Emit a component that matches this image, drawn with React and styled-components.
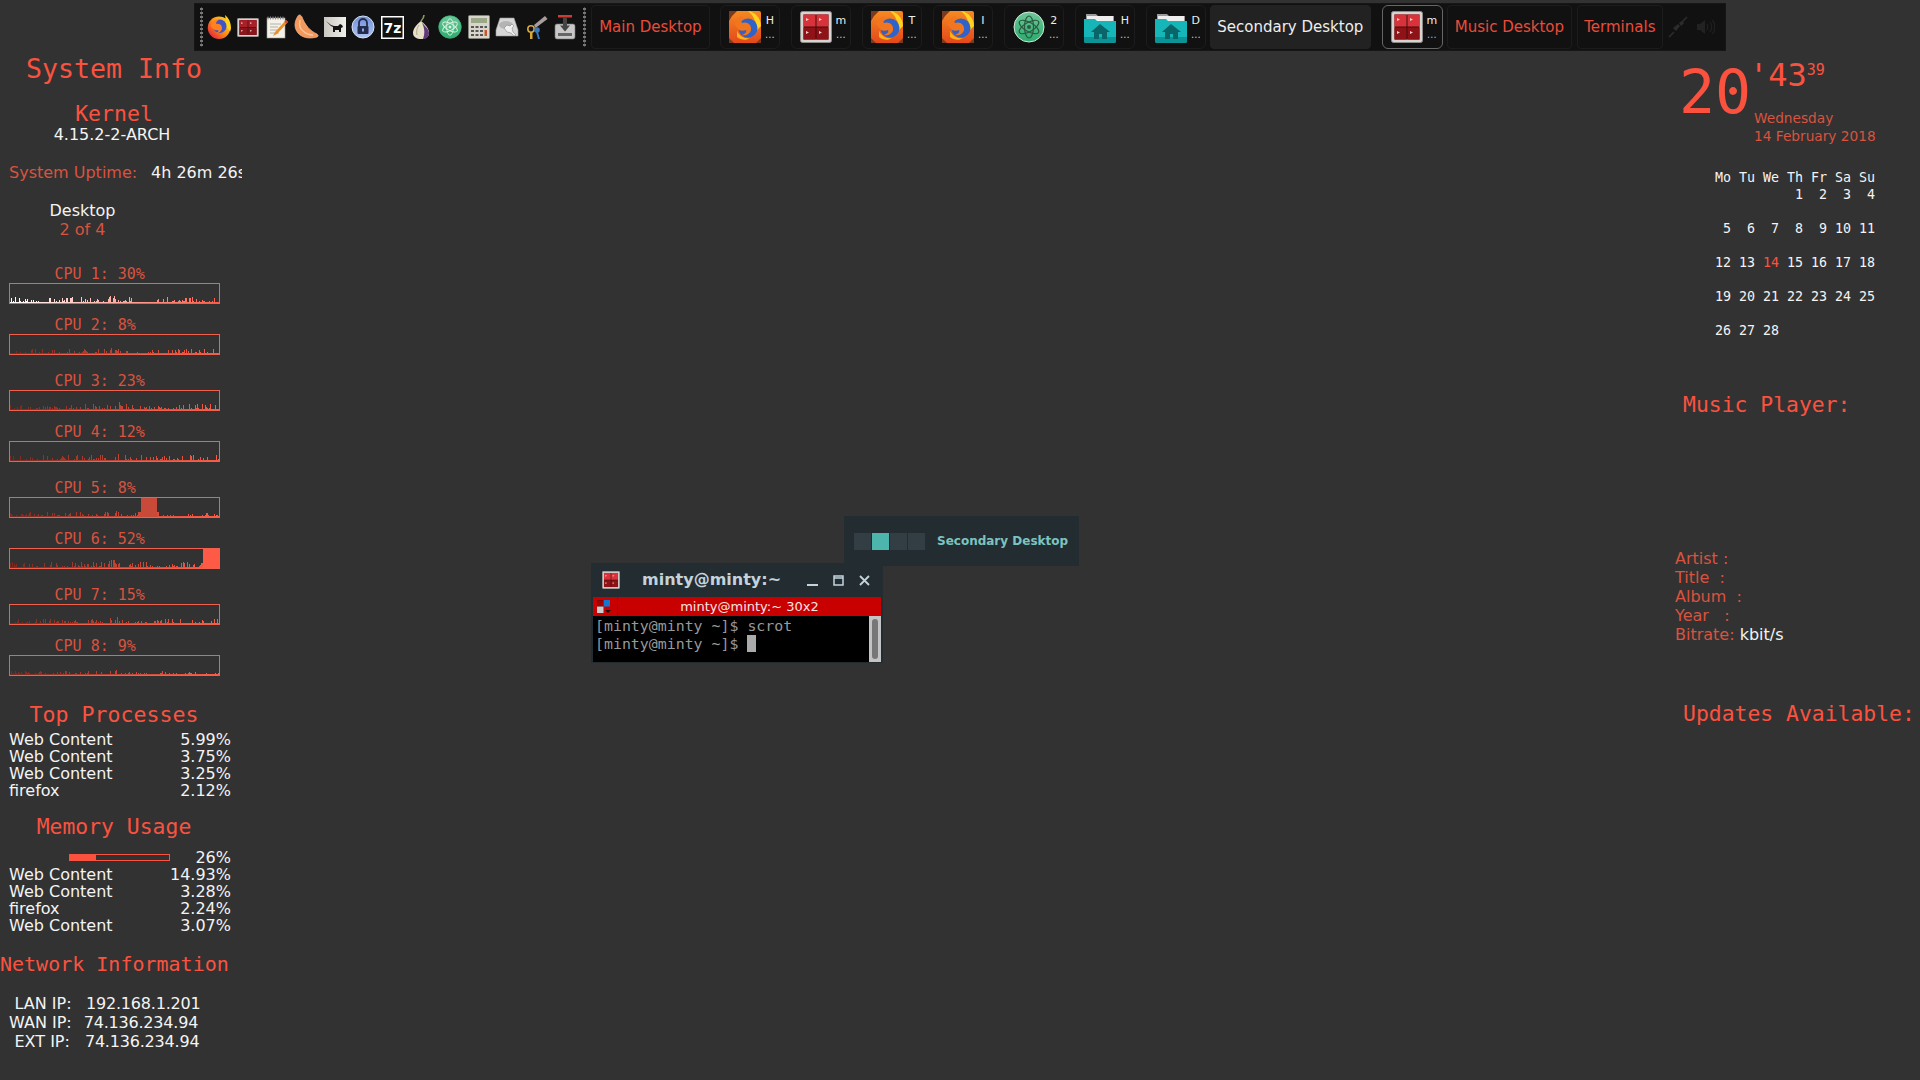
import styled, { createGlobalStyle } from 'styled-components'

const CORAL = '#fb5240'
const DIM = '#d9533f'
const MONO = '"DejaVu Sans Mono", "Liberation Mono", monospace'
const SANS = '"DejaVu Sans", "Noto Sans", sans-serif'

const GlobalStyle = createGlobalStyle`
  html, body {
    margin: 0;
    padding: 0;
    background: #323232;
  }
`

const Desktop = styled.div`
  position: relative;
  width: 1920px;
  height: 1080px;
  overflow: hidden;
  background: #323232;
  font-family: ${SANS};
`

/* ---------- top panel ---------- */
const Panel = styled.div`
  display: flex;
  align-items: center;
  box-sizing: border-box;
  width: 1532px;
  height: 48px;
  margin: 3px 0 0 194px;
  padding-left: 6px;
  background: #111;
  box-shadow: inset 0 0 0 1px #161616;
`
const Grip = styled.div`
  flex: none;
  width: 3px;
  height: 40px;
  background: radial-gradient(circle at center, #777 1.4px, transparent 1.6px) 0 0 / 3px 4px;
`
const Launchers = styled.div`
  display: flex;
  flex: none;
  margin: 0 4px 0 2px;
`
const LauncherSlot = styled.div`
  display: flex;
  align-items: center;
  justify-content: center;
  width: 28.8px;
  height: 32px;
`
const TextButton = styled.div`
  flex: none;
  box-sizing: border-box;
  width: ${p => p.$width}px;
  height: 44px;
  margin-left: ${p => p.$left || 0}px;
  border: 1px solid ${p => (p.$active ? '#222' : '#1c1c1c')};
  border-radius: 4px;
  background: ${p => (p.$active ? '#222' : 'transparent')};
  color: ${p => (p.$active ? '#eee' : '#ea4c3a')};
  font-size: 15px;
  line-height: 42px;
  text-align: center;
  white-space: nowrap;
`
const TaskButton = styled.div`
  flex: none;
  display: flex;
  align-items: center;
  box-sizing: border-box;
  width: ${p => (p.$active ? 61 : 60)}px;
  height: 44px;
  margin-left: ${p => p.$left}px;
  padding-left: 8px;
  border: 1px solid ${p => (p.$active ? '#666' : '#1c1c1c')};
  border-radius: 6px;
`
const TaskLabel = styled.div`
  display: flex;
  flex-direction: column;
  align-items: center;
  width: 16px;
  margin-left: 1px;
  color: #eee;
  font-size: 11px;
  line-height: 16px;
`
const TaskDots = styled.span`
  color: ${p => (p.$active ? '#7cc4f0' : '#ccc')};
  font-size: 10px;
  line-height: 12px;
`
const Tray = styled.div`
  display: flex;
  align-items: center;
  gap: 9px;
  margin-left: 5px;
`

/* ---------- left conky ---------- */
const LeftConky = styled.div`
  position: absolute;
  top: 0;
  left: 0;
  box-sizing: border-box;
  width: 242px;
  height: 1080px;
  overflow: hidden;
  padding-top: 54px;
  color: #f4f4f4;
  font-size: 16px;
`
const Heading = styled.div`
  width: 228px;
  margin-top: ${p => p.$top || 0}px;
  color: ${CORAL};
  font-family: ${MONO};
  font-size: ${p => p.$size}px;
  line-height: ${p => p.$line}px;
  text-align: center;
  white-space: nowrap;
`
const PlainCenter = styled.div`
  width: ${p => p.$width || 224}px;
  color: ${p => p.$color || '#f4f4f4'};
  font-size: 16px;
  line-height: ${p => p.$line || 18}px;
  margin-top: ${p => p.$top || 0}px;
  text-align: center;
`
const UptimeRow = styled.div`
  display: flex;
  margin-top: 20px;
  padding-left: 9px;
  font-size: 16px;
  line-height: 18px;
  white-space: nowrap;
`
const UptimeLabel = styled.span`
  flex: none;
  width: 142px;
  color: ${DIM};
`
const CpuBlock = styled.div`
  margin-top: ${p => p.$top}px;
  padding-left: 9px;
`
const CpuLabel = styled.div`
  padding-left: 45.5px;
  color: ${DIM};
  font-family: ${MONO};
  font-size: 15px;
  line-height: 18px;
`
const GraphBox = styled.div`
  box-sizing: border-box;
  width: 211px;
  height: 21px;
  border: 1px solid #f0604c;
`
const ProcRow = styled.div`
  display: flex;
  justify-content: space-between;
  align-items: center;
  box-sizing: border-box;
  width: 231px;
  height: 17px;
  padding-left: 9px;
  margin-top: ${p => p.$top || 0}px;
  font-size: 16px;
  line-height: 17px;
`
const MemBar = styled.div`
  box-sizing: border-box;
  width: 101px;
  height: 7px;
  margin-left: 60px;
  border: 1px solid ${CORAL};
`
const MemFill = styled.div`
  height: 100%;
  background: ${CORAL};
`
const NetRow = styled.div`
  display: flex;
  box-sizing: border-box;
  height: 19px;
  padding-left: ${p => p.$left}px;
  margin-top: ${p => p.$top || 0}px;
  font-size: 16px;
  line-height: 19px;
  white-space: nowrap;
`
const NetValue = styled.span`
  margin-left: ${p => p.$gap}px;
  letter-spacing: -0.2px;
`

/* ---------- right conky ---------- */
const RightConky = styled.div`
  position: absolute;
  top: 0;
  left: 1660px;
  box-sizing: border-box;
  width: 260px;
  height: 1080px;
  padding-top: 54px;
  overflow: hidden;
  color: #f4f4f4;
`
const Clock = styled.div`
  display: flex;
  padding-left: 19px;
  color: ${CORAL};
  font-family: ${MONO};
`
const Hours = styled.div`
  width: 75px;
  font-size: 60px;
  line-height: 76px;
`
const ClockSide = styled.div`
  display: flex;
  flex-direction: column;
`
const MinuteLine = styled.div`
  display: flex;
  height: 55px;
  margin-left: -5px;
  font-size: 32px;
  line-height: 42px;
`
const Seconds = styled.span`
  font-size: 15px;
  line-height: 33px;
`
const DateText = styled.div`
  font-family: ${SANS};
  font-size: 13.7px;
  line-height: 18px;
  color: ${DIM};
  white-space: nowrap;
`
const Calendar = styled.div`
  margin: 23.5px 0 0 55px;
  font-family: ${MONO};
  font-size: 13.3px;
  line-height: 17px;
`
const CalRow = styled.div`
  height: 17px;
  margin-bottom: ${p => (p.$head ? 0 : 17)}px;
  white-space: pre;
`
const Today = styled.span`
  color: ${CORAL};
`
const SideHeading = styled.div`
  padding-left: 23px;
  margin-top: ${p => p.$top}px;
  color: ${CORAL};
  font-family: ${MONO};
  font-size: 21.4px;
  line-height: 26px;
  white-space: nowrap;
`
const TrackInfo = styled.div`
  margin-top: ${p => p.$top}px;
  padding-left: 15px;
  color: ${DIM};
  font-size: 16px;
  line-height: 19px;
  white-space: pre;
`
const White = styled.span`
  color: #f4f4f4;
`

/* ---------- windows ---------- */
const PagerPopup = styled.div`
  position: absolute;
  left: 844px;
  top: 516px;
  display: flex;
  align-items: center;
  box-sizing: border-box;
  width: 235px;
  height: 50px;
  padding-left: 10px;
  background: #232c31;
`
const PagerCell = styled.div`
  width: 17px;
  height: 17px;
  margin-right: 1px;
  background: ${p => (p.$on ? '#4db6ac' : '#323e43')};
`
const PagerTitle = styled.div`
  margin: 0 0 1px 11px;
  color: #7cc4c0;
  font-size: 12px;
  font-weight: bold;
  white-space: nowrap;
`
const TermWindow = styled.div`
  position: absolute;
  left: 591px;
  top: 563px;
  box-sizing: border-box;
  width: 292px;
  height: 100px;
  padding: 0 2px 1px;
  background: #232c31;
`
const TitleBar = styled.div`
  display: flex;
  align-items: center;
  box-sizing: border-box;
  height: 34px;
  padding-left: 9px;
  color: #c3d3dc;
`
const WinTitle = styled.div`
  width: 165px;
  margin: 0 0 2px 22px;
  font-size: 16px;
  font-weight: bold;
  white-space: nowrap;
`
const WinButtons = styled.div`
  display: flex;
  gap: 15px;
`
const MenuBar = styled.div`
  display: flex;
  align-items: center;
  height: 19px;
  background: #c80000;
  color: #f6e6e6;
  font-size: 13px;
`
const MenuTitle = styled.div`
  flex: 1;
  text-align: center;
  white-space: nowrap;
`
const MenuIconWrap = styled.div`
  display: flex;
  align-items: center;
  width: 25px;
  height: 19px;
  padding-left: 4px;
  box-sizing: border-box;
  border-right: 1px solid #b00000;
`
const TermBody = styled.div`
  display: flex;
  height: 46px;
  background: #000;
`
const TermText = styled.pre`
  flex: 1;
  margin: 0;
  padding: 1px 0 0 2px;
  color: #999;
  font-family: ${MONO};
  font-size: 14.9px;
  line-height: 18px;
`
const Cursor = styled.span`
  display: inline-block;
  width: 9px;
  height: 17px;
  vertical-align: -3px;
  background: #aaa;
`
const ScrollTrack = styled.div`
  box-sizing: border-box;
  width: 12px;
  padding: 3px 3px;
  background: #c4c4c4;
`
const ScrollThumb = styled.div`
  height: 40px;
  border-radius: 3px;
  background: #777;
`

/* ---------- drawings ---------- */
const Firefox = () => (
  <svg width="24" height="24" viewBox="0 0 32 32">
    <defs>
      <linearGradient id="ffo" x1="0.9" y1="0.1" x2="0.1" y2="0.9">
        <stop offset="0" stopColor="#ffd21e" />
        <stop offset="0.5" stopColor="#ff8a14" />
        <stop offset="1" stopColor="#e6223e" />
      </linearGradient>
    </defs>
    <circle cx="16" cy="17" r="15" fill="url(#ffo)" />
    <path d="M24 0c5 4 8 10 8 17 0 2-1 4-1 5l-6-7c0-6 0-10-1-15z" fill="#ffd21e" />
    <circle cx="17" cy="15" r="9" fill="#3d55c8" />
    <path d="M5 14c2-5 6-8 12-8-3 1-5 3-5 6 4-1 8 1 8 5 0 5-5 8-9 7 3 0 5-2 4-4-4 1-8-1-10-6z" fill="#ff8120" />
  </svg>
)

const FirefoxTile = () => (
  <svg width="32" height="32" viewBox="0 0 32 32">
    <defs>
      <linearGradient id="fft" x1="0" y1="0" x2="0" y2="1">
        <stop offset="0" stopColor="#f58a22" />
        <stop offset="1" stopColor="#e4481a" />
      </linearGradient>
    </defs>
    <rect x="0" y="0" width="32" height="32" rx="2" fill="url(#fft)" />
    <path d="M0 0h8L3 5 0 10zM32 32h-5l5-5zM0 32v-5l5 5z" fill="#7a3a20" />
    <path d="M19 0c7 1 13 7 13 15l-5 5c1-8-2-15-8-20z" fill="#ffd21e" />
    <circle cx="19" cy="17" r="9.5" fill="#2f63c9" />
    <path d="M5 13c2-5 5-7 9-8-2 3-2 5-1 7 5-2 10 2 9 7-1 4-5 6-9 5 3-1 5-3 4-5-2 1-5 1-7 0z" fill="#f2761e" />
    <path d="M8 20c3 5 7 8 13 7-4 3-9 2-13-1z" fill="#ffb21e" />
  </svg>
)

/* silver frame around four red cells; the launcher copy is flatter and darker */
const RedTerm = ({ width = 32, height = 32, top = '#d8323a', bottom = '#8e1216' }) => (
  <svg width={width} height={height} viewBox="0 0 32 32" preserveAspectRatio="none">
    <rect x="0.5" y="0.5" width="31" height="31" rx="2" fill="#d6d3d0" stroke="#8e8a88" />
    <rect x="3.5" y="3.5" width="25" height="25" fill="#4a0a0c" />
    <rect x="3.5" y="3.5" width="12" height="12" fill={top} />
    <rect x="16.5" y="3.5" width="12" height="12" fill={top} />
    <rect x="3.5" y="16.5" width="12" height="12" fill={bottom} />
    <rect x="16.5" y="16.5" width="12" height="12" fill={bottom} />
    <path d="M6 7l3 1.5-3 1.5zM19 7l3 1.5-3 1.5zM6 20l3 1.5-3 1.5zM19 20l3 1.5-3 1.5z" fill="#f3c9c9" />
  </svg>
)

const AtomIcon = ({ size = 24, orbit = '#d8f2e2', rim = '#3ab57c' }) => (
  <svg width={size} height={size} viewBox="0 0 32 32">
    <defs>
      <linearGradient id={`atm${size}`} x1="0" y1="0" x2="0" y2="1">
        <stop offset="0" stopColor="#6cc898" />
        <stop offset="1" stopColor="#2bab6c" />
      </linearGradient>
    </defs>
    <circle cx="16" cy="16" r="15" fill={`url(#atm${size})`} stroke={rim} strokeWidth="1" />
    <g fill="none" stroke={orbit} strokeWidth="1.2">
      <ellipse cx="16" cy="16" rx="11" ry="4.5" transform="rotate(30 16 16)" />
      <ellipse cx="16" cy="16" rx="11" ry="4.5" transform="rotate(90 16 16)" />
      <ellipse cx="16" cy="16" rx="11" ry="4.5" transform="rotate(150 16 16)" />
    </g>
    <circle cx="16" cy="16" r="2" fill={orbit} />
  </svg>
)

const FolderHome = () => (
  <svg width="32" height="32" viewBox="0 0 32 32">
    <path d="M2 3h10l2 2h16v6H2z" fill="#9a9a9a" />
    <rect x="3" y="5" width="26" height="6" fill="#eee" />
    <path d="M0 8h11l2 2h19v20a2 2 0 0 1-2 2H2a2 2 0 0 1-2-2z" fill="#16b5b8" />
    <path d="M0 26h32v4a2 2 0 0 1-2 2H2a2 2 0 0 1-2-2z" fill="#0c9396" />
    <path d="M16 13l-9 8h3v7h5v-5h3v5h5v-7h3z" fill="#0a6468" />
  </svg>
)

const launcherIcons = [
  <Firefox key="ff" />,
  <RedTerm key="term" width={22} height={19} top="#a82028" bottom="#8a161c" />,
  <svg key="note" width="24" height="24" viewBox="0 0 24 24">
    <rect x="2" y="3" width="18" height="20" fill="#f4f1e6" stroke="#999" strokeWidth="0.6" />
    <path d="M3 1.5v3M5.5 1.5v3M8 1.5v3M10.5 1.5v3M13 1.5v3M15.5 1.5v3M18 1.5v3" stroke="#888" strokeWidth="1" />
    <path d="M5 9h11M5 12h8M5 15h7M5 18h9" stroke="#aaa" strokeWidth="0.9" />
    <path d="M21 5l2 2-11 12-4 2 2-4z" fill="#e8912c" />
    <path d="M21 5l2 2-1.6 1.7-2-2z" fill="#d4453a" />
  </svg>,
  <svg key="clem" width="26" height="26" viewBox="0 0 26 26">
    <path d="M5 2c-4 6-4 12 0 17 4 5 12 6 19 4 2-1 1-2 0-3C17 17 12 11 9 3 8 1 6 0 5 2z" fill="#f4985c" stroke="#fbb98a" strokeWidth="0.7" />
    <path d="M7 6c-1 5 0 9 3 11 3 3 7 4 10 4" fill="none" stroke="#fbc79d" strokeWidth="1.4" />
  </svg>,
  <svg key="conky" width="22" height="20" viewBox="0 0 22 20">
    <defs>
      <linearGradient id="cnk" x1="0" y1="0" x2="1" y2="0">
        <stop offset="0" stopColor="#c8c8c0" />
        <stop offset="1" stopColor="#f0f0ea" />
      </linearGradient>
    </defs>
    <rect x="0" y="0" width="22" height="20" fill="url(#cnk)" />
    <path d="M2 4l5 4 3 1h4l2-2 2 1 1 2-2 1v4h-2v-2h-4v2H9v-5L7 9z" fill="#111" />
  </svg>,
  <svg key="lock" width="24" height="24" viewBox="0 0 24 24">
    <defs>
      <linearGradient id="lck" x1="0" y1="0" x2="0" y2="1">
        <stop offset="0" stopColor="#6f8fd8" />
        <stop offset="1" stopColor="#b0c4f0" />
      </linearGradient>
    </defs>
    <circle cx="12" cy="12" r="11" fill="url(#lck)" stroke="#d6e0f6" strokeWidth="1" />
    <path d="M8 11V8a4 4 0 0 1 8 0v3" fill="none" stroke="#232c4c" strokeWidth="1.8" />
    <rect x="6.5" y="11" width="11" height="8" rx="1" fill="#232c4c" />
    <rect x="11" y="13.5" width="2" height="3" fill="#8aa8e8" />
  </svg>,
  <svg key="7z" width="23" height="23" viewBox="0 0 23 23">
    <rect x="0" y="0" width="23" height="23" fill="#fff" />
    <rect x="1.5" y="1.5" width="20" height="20" fill="#111" />
    <text x="11.5" y="17" textAnchor="middle" fill="#fff" fontFamily={SANS} fontWeight="bold" fontSize="14">7z</text>
  </svg>,
  <svg key="tor" width="24" height="26" viewBox="0 0 24 26">
    <path d="M15 1c0 3-2 5-3 6" stroke="#8a9a5a" strokeWidth="1.6" fill="none" />
    <path d="M12 7c-5 4-8 8-8 12 0 4 4 6 8 6s8-2 8-6c0-4-3-8-8-12z" fill="#e6e0c8" />
    <path d="M12.5 8c3 4 7.5 7 7.5 11 0 4-3 6-6 6 2-5 2-11-1.5-17z" fill="#5e3a78" />
    <path d="M10 11c-2 3-3 6-2 10" stroke="#a9a288" strokeWidth="0.9" fill="none" />
  </svg>,
  <AtomIcon key="atom" />,
  <svg key="calc" width="22" height="24" viewBox="0 0 22 24">
    <rect x="0.5" y="0.5" width="21" height="23" rx="1" fill="#d8d6cc" stroke="#8a8a80" strokeWidth="0.7" />
    <rect x="3" y="3" width="16" height="5" fill="#9aa888" />
    <path d="M3 11h3v2H3zM7.5 11h3v2h-3zM12 11h3v2h-3zM16.5 11H19v2h-2.5zM3 15h3v2H3zM7.5 15h3v2h-3zM12 15h3v2h-3zM3 19h3v2H3zM7.5 19h3v2h-3zM12 19h3v2h-3z" fill="#555" />
    <path d="M16.5 15H19v6h-2.5z" fill="#c8552c" />
  </svg>,
  <svg key="disk" width="24" height="20" viewBox="0 0 24 20">
    <path d="M5 1h14l4 12v6H1v-6z" fill="#d6d6d6" stroke="#999" strokeWidth="0.6" />
    <ellipse cx="11" cy="8" rx="7" ry="4" fill="#b4b4b4" />
    <path d="M9 11l3-3 3 1 2-2 2 2-2 2 1 4 3 3-2 1-3-3-4-1z" fill="#f0f0f0" stroke="#777" strokeWidth="0.5" />
  </svg>,
  <svg key="keys" width="24" height="26" viewBox="0 0 24 26">
    <path d="M10 11l11-9 2.5 3-12 9z" fill="#a89c9c" />
    <circle cx="7" cy="15" r="3.2" fill="none" stroke="#d8a838" strokeWidth="1.6" />
    <path d="M6 18v7h2.5v-7z" fill="#d8a838" />
    <circle cx="13" cy="16" r="2.8" fill="#3a78b8" />
    <path d="M12 18l2 7h2l-2-7z" fill="#3a78b8" />
  </svg>,
  <svg key="inst" width="22" height="26" viewBox="0 0 22 26">
    <rect x="1" y="10" width="20" height="15" rx="2" fill="#c8c8c8" stroke="#777" strokeWidth="0.6" />
    <rect x="4" y="19" width="14" height="3" fill="#666" />
    <path d="M4 1h14v2.5H4z" fill="#d03a30" />
    <path d="M9 3.5h4v8h3l-5 6-5-6h3z" fill="#444" />
  </svg>
]

const Plug = () => (
  <svg width="20" height="22" viewBox="0 0 20 22">
    <path d="M1 21l5-5M19 1l-5 5" stroke="#2c2c2c" strokeWidth="1.6" />
    <path d="M5 12l5-4 2 2-4 5zM11 7l3-2 2 2-3 3z" fill="#2c2c2c" />
  </svg>
)

const Speaker = () => (
  <svg width="18" height="16" viewBox="0 0 18 16">
    <path d="M0 5h3l5-4v14l-5-4H0z" fill="#222" />
    <path d="M10 5c1 2 1 4 0 6M13 3c2 3 2 7 0 10M15.5 1c3 4 3 10 0 14" fill="none" stroke="#202020" strokeWidth="1.3" />
  </svg>
)

const MenuIcon = () => (
  <svg width="15" height="14" viewBox="0 0 15 14">
    <rect x="0" y="0" width="6.5" height="6.5" fill="#a80000" stroke="#111" strokeWidth="0.6" />
    <rect x="6.5" y="0" width="6.5" height="6.5" fill="#1478d0" />
    <rect x="0" y="6.5" width="6.5" height="6.5" fill="#ccc" />
    <path d="M8 10h6l-3 3z" fill="#111" />
  </svg>
)

/* one pseudo random graph per core: a thin noise floor, a bump mid way, and a solid block */
function cpuBars (seed, peak, block) {
  const bars = []
  let s = seed * 9301 + 49297
  for (let x = 0; x < 209; x++) {
    s = (s * 9301 + 49297) % 233280
    const r = s / 233280
    let h = 1 + Math.floor(r * r * r * r * peak)
    if (x > 98 && x < 110 && r > 0.6) h += 2
    if (block && x >= block[0] - 2 && x < block[1] + 2) h = Math.max(h, 5)
    bars.push(h)
  }
  return bars
}

const CpuGraph = ({ id, seed, peak, from, block, solid }) => (
  <svg width="209" height="19" viewBox="0 0 209 19" style={{ display: 'block' }}>
    <defs>
      <linearGradient id={id} x1="0" y1="0" x2="1" y2="0">
        <stop offset="0" stopColor={from} />
        <stop offset="1" stopColor="#ff5a45" />
      </linearGradient>
    </defs>
    <path
      fill={`url(#${id})`}
      d={cpuBars(seed, peak, block).map((h, x) => `M${x} 19v-${h}h1v${h}z`).join('')}
    />
    {solid && <rect x={block[0]} y="0" width={block[1] - block[0]} height="19" fill={solid} />}
  </svg>
)

const cpus = [
  { n: 1, v: '30%', top: 26, seed: 3, peak: 6, from: '#ffffff' },
  { n: 2, v: '8%', top: 12, seed: 7, peak: 5, from: '#7a2a20' },
  { n: 3, v: '23%', top: 17, seed: 11, peak: 6, from: '#7a2a20' },
  { n: 4, v: '12%', top: 12, seed: 17, peak: 6, from: '#7a2a20' },
  { n: 5, v: '8%', top: 17, seed: 23, peak: 5, from: '#7a2a20', block: [131, 147], solid: '#c94a38' },
  { n: 6, v: '52%', top: 12, seed: 29, peak: 6, from: '#7a2a20', block: [193, 209], solid: '#ff5a45' },
  { n: 7, v: '15%', top: 17, seed: 31, peak: 5, from: '#7a2a20' },
  { n: 8, v: '9%', top: 12, seed: 37, peak: 4, from: '#7a2a20' }
]

const tasks = [
  { icon: <FirefoxTile />, letter: 'H', left: 10 },
  { icon: <RedTerm />, letter: 'm', left: 11 },
  { icon: <FirefoxTile />, letter: 'T', left: 11 },
  { icon: <FirefoxTile />, letter: 'I', left: 11 },
  { icon: <AtomIcon size={32} orbit="#2c5a44" rim="#d6e6dc" />, letter: '2', left: 11 },
  { icon: <FolderHome />, letter: 'H', left: 11 },
  { icon: <FolderHome />, letter: 'D', left: 11 }
]

const Task = ({ icon, letter, left, active }) => (
  <TaskButton $left={left} $active={active}>
    {icon}
    <TaskLabel>
      {letter}
      <TaskDots $active={active}>...</TaskDots>
    </TaskLabel>
  </TaskButton>
)

const Proc = ({ name, value, top }) => (
  <ProcRow $top={top}>
    <span>{name}</span>
    <span>{value}</span>
  </ProcRow>
)

export default function App () {
  return (
    <Desktop>
      <GlobalStyle />
      <Panel>
        <Grip />
        <Launchers>
          {launcherIcons.map((icon, i) => (
            <LauncherSlot key={i}>{icon}</LauncherSlot>
          ))}
        </Launchers>
        <Grip />
        <TextButton $width={119} $left={4.5}>Main Desktop</TextButton>
        {tasks.map((t, i) => <Task key={i} {...t} />)}
        <TextButton $width={161} $left={4} $active>Secondary Desktop</TextButton>
        <Task icon={<RedTerm />} letter="m" left={11} active />
        <TextButton $width={125} $left={4}>Music Desktop</TextButton>
        <TextButton $width={86} $left={5}>Terminals</TextButton>
        <Tray>
          <Plug />
          <Speaker />
        </Tray>
      </Panel>

      <LeftConky>
        <Heading $size={26.6} $line={30}>System Info</Heading>
        <Heading $size={21.5} $line={24} $top={18}>Kernel</Heading>
        <PlainCenter>4.15.2-2-ARCH</PlainCenter>
        <UptimeRow>
          <UptimeLabel>System Uptime:</UptimeLabel>
          <span>4h 26m 26s</span>
        </UptimeRow>
        <PlainCenter $width={165} $line={19} $top={18.5}>Desktop</PlainCenter>
        <PlainCenter $width={165} $line={19} $color={DIM}>2 of 4</PlainCenter>
        {cpus.map(c => (
          <CpuBlock key={c.n} $top={c.top}>
            <CpuLabel>CPU {c.n}: {c.v}</CpuLabel>
            <GraphBox>
              <CpuGraph id={`cpu${c.n}`} seed={c.seed} peak={c.peak} from={c.from} block={c.block} solid={c.solid} />
            </GraphBox>
          </CpuBlock>
        ))}
        <Heading $size={21.6} $line={26} $top={26}>Top Processes</Heading>
        <Proc name="Web Content" value="5.99%" top={3.5} />
        <Proc name="Web Content" value="3.75%" />
        <Proc name="Web Content" value="3.25%" />
        <Proc name="firefox" value="2.12%" />
        <Heading $size={21.4} $line={26} $top={14.5}>Memory Usage</Heading>
        <ProcRow $top={9.5}>
          <MemBar><MemFill style={{ width: '26%' }} /></MemBar>
          <span>26%</span>
        </ProcRow>
        <Proc name="Web Content" value="14.93%" />
        <Proc name="Web Content" value="3.28%" />
        <Proc name="firefox" value="2.24%" />
        <Proc name="Web Content" value="3.07%" />
        <Heading $size={20} $line={26} $top={16.5}>Network Information</Heading>
        <NetRow $left={14.5} $top={17.5}>LAN IP:<NetValue $gap={14.5}>192.168.1.201</NetValue></NetRow>
        <NetRow $left={9}>WAN IP:<NetValue $gap={12}>74.136.234.94</NetValue></NetRow>
        <NetRow $left={14.5}>EXT IP:<NetValue $gap={15}>74.136.234.94</NetValue></NetRow>
      </LeftConky>

      <RightConky>
        <Clock>
          <Hours>20</Hours>
          <ClockSide>
            <MinuteLine>'43<Seconds>39</Seconds></MinuteLine>
            <DateText>Wednesday</DateText>
            <DateText>14 February 2018</DateText>
          </ClockSide>
        </Clock>
        <Calendar>
          <CalRow $head>Mo Tu We Th Fr Sa Su</CalRow>
          <CalRow>{'          1  2  3  4'}</CalRow>
          <CalRow>{' 5  6  7  8  9 10 11'}</CalRow>
          <CalRow>12 13 <Today>14</Today> 15 16 17 18</CalRow>
          <CalRow>19 20 21 22 23 24 25</CalRow>
          <CalRow>26 27 28</CalRow>
        </Calendar>
        <SideHeading $top={53}>Music Player:</SideHeading>
        <TrackInfo $top={131.5}>
          {'Artist :\nTitle  :\nAlbum  :\nYear   :\nBitrate: '}
          <White>kbit/s</White>
        </TrackInfo>
        <SideHeading $top={57}>Updates Available:</SideHeading>
      </RightConky>

      <PagerPopup>
        <PagerCell />
        <PagerCell $on />
        <PagerCell />
        <PagerCell />
        <PagerTitle>Secondary Desktop</PagerTitle>
      </PagerPopup>

      <TermWindow>
        <TitleBar>
          <RedTerm width={18} height={18} />
          <WinTitle>minty@minty:~</WinTitle>
          <WinButtons>
            <svg width="11" height="11" viewBox="0 0 11 11"><path d="M0 10h11" stroke="#c3d3dc" strokeWidth="2" /></svg>
            <svg width="11" height="11" viewBox="0 0 11 11"><path d="M1 1h9v9H1zM1 3h9" fill="none" stroke="#c3d3dc" strokeWidth="1.5" /></svg>
            <svg width="11" height="11" viewBox="0 0 11 11"><path d="M1 1l9 9M10 1l-9 9" stroke="#c3d3dc" strokeWidth="1.8" /></svg>
          </WinButtons>
        </TitleBar>
        <MenuBar>
          <MenuIconWrap><MenuIcon /></MenuIconWrap>
          <MenuTitle>minty@minty:~ 30x2</MenuTitle>
        </MenuBar>
        <TermBody>
          <TermText>
            {'[minty@minty ~]$ scrot\n[minty@minty ~]$ '}
            <Cursor />
          </TermText>
          <ScrollTrack><ScrollThumb /></ScrollTrack>
        </TermBody>
      </TermWindow>
    </Desktop>
  )
}
